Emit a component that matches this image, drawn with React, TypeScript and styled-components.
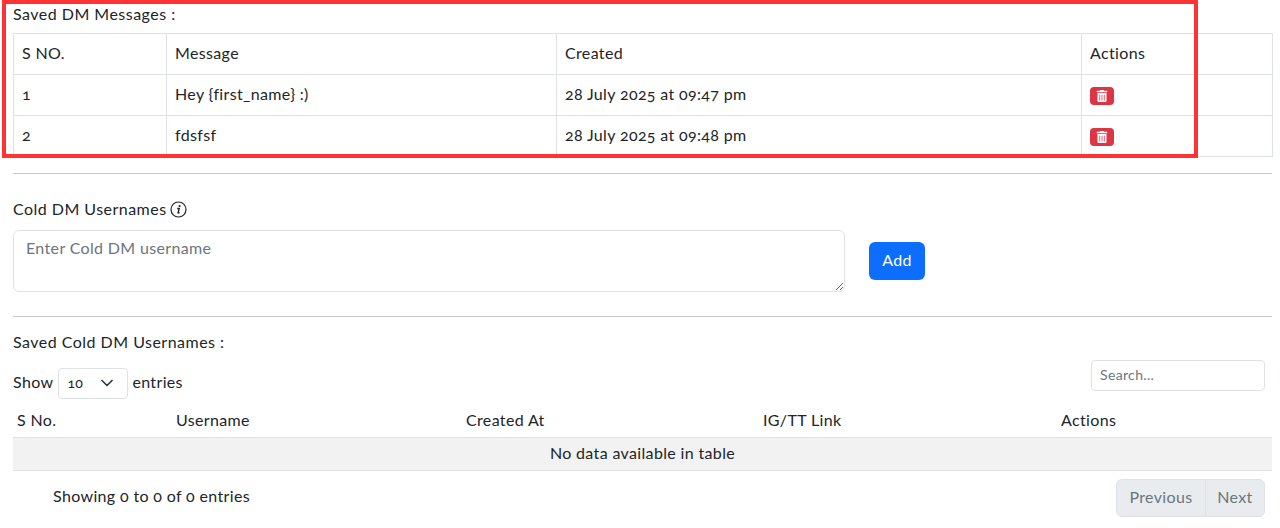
import React from "react";
import styled, { createGlobalStyle } from "styled-components";
import { FaTrashAlt } from "react-icons/fa";

const Global = createGlobalStyle`
  html, body { margin: 0; padding: 0; background: #fff; overflow: hidden; }
  body {
    font-family: "Lato", "Noto Sans", sans-serif;
    font-size: 16px;
    line-height: 24px;
    color: #212529;
    font-variant-numeric: oldstyle-nums;
    letter-spacing: 0.35px;
  }
`;

const Page = styled.main`
  padding: 2px 8px 0 13px;
  width: 1280px;
  height: 528px;
  box-sizing: border-box;
`;

const Highlight = styled.div`
  position: absolute;
  left: 2px;
  top: 0;
  width: 1196px;
  height: 158px;
  box-sizing: border-box;
  border: 4px solid #ff3333;
  pointer-events: none;
`;

const Title = styled.div`
  height: 24px;
  line-height: 24px;
  letter-spacing: 0.48px;
`;

const BorderedTable = styled.table`
  width: 1259px;
  margin-top: 7px;
  border-collapse: collapse;
  table-layout: fixed;
  th, td {
    border: 1px solid #dee2e6;
    padding: 0 8px 2px;
    height: 38px;
    font-weight: 400;
    text-align: left;
  }
`;

const DeleteButton = styled.button`
  display: flex;
  align-items: center;
  justify-content: center;
  width: 24px;
  height: 18px;
  margin-top: 4px;
  padding: 0;
  border: 0;
  border-radius: 4px;
  background: #dc3545;
  color: #fff;
  font-size: 12px;
`;

const Rule = styled.hr<{ $top: number }>`
  margin: ${(p) => p.$top}px 0 0;
  border: 0;
  border-top: 1px solid #c9c9c9;
`;

const Label = styled.div`
  display: flex;
  align-items: center;
  gap: 3px;
  margin-top: 23px;
  height: 24px;
  letter-spacing: 0.47px;
`;

const InfoIcon = styled.svg`
  width: 17px;
  height: 17px;
  color: #212529;
`;

const AddRow = styled.div`
  display: flex;
  align-items: center;
  gap: 24px;
  margin-top: 9px;
`;

const Area = styled.textarea`
  display: block;
  width: 832px;
  height: 62px;
  box-sizing: border-box;
  padding: 5px 12px;
  border: 1px solid #dee2e6;
  border-radius: 6px;
  font: inherit;
  letter-spacing: inherit;
  color: #212529;
  outline: none;
  &::placeholder { color: #6c757d; opacity: 1; }
`;

const AddButton = styled.button`
  width: 56px;
  height: 38px;
  border: 0;
  border-radius: 6px;
  background: #0d6efd;
  color: #fff;
  font: inherit;
  letter-spacing: inherit;
  padding: 0 0 2px;
`;

const Subtitle = styled(Title)`
  margin-top: 13px;
`;

const ControlsRow = styled.div`
  display: flex;
  align-items: flex-start;
  justify-content: space-between;
  height: 39px;
  padding-right: 7px;
  margin-top: 6px;
`;

const LengthControl = styled.div`
  display: flex;
  align-items: flex-start;
  gap: 4px;
  margin-top: 8px;
  height: 31px;
  line-height: 27px;
`;

const SelectBox = styled.div`
  display: flex;
  align-items: center;
  justify-content: space-between;
  box-sizing: border-box;
  width: 70px;
  height: 31px;
  margin-left: 1px;
  padding: 0 14px 2px 8px;
  border: 1px solid #dee2e6;
  border-radius: 4px;
  font-size: 14px;
`;

const Chevron = styled.svg`
  width: 12px;
  height: 12px;
  color: #343a40;
`;

const SearchInput = styled.input`
  box-sizing: border-box;
  width: 174px;
  height: 31px;
  padding: 0 8px 3px;
  border: 1px solid #dee2e6;
  border-radius: 4px;
  font: inherit;
  font-size: 14px;
  letter-spacing: inherit;
  outline: none;
  &::placeholder { color: #6c757d; opacity: 1; }
`;

const PlainTable = styled.table`
  width: 1259px;
  border-collapse: collapse;
  table-layout: fixed;
  th {
    height: 34px;
    padding: 4px 4px 0;
    font-weight: 400;
    text-align: left;
    border-bottom: 1px solid #dee2e6;
  }
  td {
    height: 30px;
    padding: 0 0 2px;
    text-align: center;
    background: #f2f2f2;
    border-bottom: 1px solid #dee2e6;
  }
`;

const Footer = styled.div`
  display: flex;
  align-items: center;
  justify-content: space-between;
  margin-top: 8px;
  padding: 0 7px 0 40px;
`;

const FooterText = styled.span`
  padding-bottom: 4px;
`;

const Pager = styled.div`
  display: flex;
  height: 38px;
  box-sizing: border-box;
  border: 1px solid #dee2e6;
  border-radius: 6px;
  background: #e9ecef;
  color: #6c757d;
  overflow: hidden;
`;

const PagerItem = styled.span<{ $first?: boolean }>`
  display: flex;
  align-items: center;
  justify-content: center;
  width: ${(p) => (p.$first ? 88 : 58)}px;
  padding-bottom: 3px;
  border-right: ${(p) => (p.$first ? "1px solid #dee2e6" : "0")};
`;

const messages = [
  { id: 1, text: "Hey {first_name} :)", created: "28 July 2025 at 09:47 pm" },
  { id: 2, text: "fdsfsf", created: "28 July 2025 at 09:48 pm" },
];

export default function App() {
  return (
    <Page>
      <Global />
      <Highlight />
      <Title>Saved DM Messages :</Title>
      <BorderedTable>
        <colgroup>
          <col style={{ width: 153 }} />
          <col style={{ width: 390 }} />
          <col style={{ width: 525 }} />
          <col style={{ width: 191 }} />
        </colgroup>
        <thead>
          <tr>
            <th>S NO.</th>
            <th>Message</th>
            <th>Created</th>
            <th>Actions</th>
          </tr>
        </thead>
        <tbody>
          {messages.map((m) => (
            <tr key={m.id}>
              <td>{m.id}</td>
              <td>{m.text}</td>
              <td>{m.created}</td>
              <td>
                <DeleteButton aria-label="Delete">
                  <FaTrashAlt />
                </DeleteButton>
              </td>
            </tr>
          ))}
        </tbody>
      </BorderedTable>
      <Rule $top={16} />
      <Label>
        Cold DM Usernames
        <InfoIcon viewBox="0 0 17 17" fill="none" stroke="currentColor">
          <circle cx="8.5" cy="8.5" r="7.5" strokeWidth="1.2" />
          <path d="M7.2 7.5h2l-1.1 4.3h1.5" strokeWidth="1.4" />
          <circle cx="9.6" cy="5" r="1.1" fill="currentColor" stroke="none" />
        </InfoIcon>
      </Label>
      <AddRow>
        <Area placeholder="Enter Cold DM username" />
        <AddButton>Add</AddButton>
      </AddRow>
      <Rule $top={24} />
      <Subtitle>Saved Cold DM Usernames :</Subtitle>
      <ControlsRow>
        <LengthControl>
          Show
          <SelectBox>
            10
            <Chevron viewBox="0 0 12 12" fill="none" stroke="currentColor" strokeWidth="1.7" strokeLinecap="round" strokeLinejoin="round">
              <path d="m1 3.5 5 5 5-5" />
            </Chevron>
          </SelectBox>
          entries
        </LengthControl>
        <SearchInput placeholder="Search..." />
      </ControlsRow>
      <PlainTable>
        <colgroup>
          <col style={{ width: 159 }} />
          <col style={{ width: 290 }} />
          <col style={{ width: 297 }} />
          <col style={{ width: 298 }} />
          <col style={{ width: 215 }} />
        </colgroup>
        <thead>
          <tr>
            <th>S No.</th>
            <th>Username</th>
            <th>Created At</th>
            <th>IG/TT Link</th>
            <th>Actions</th>
          </tr>
        </thead>
        <tbody>
          <tr>
            <td colSpan={5}>No data available in table</td>
          </tr>
        </tbody>
      </PlainTable>
      <Footer>
        <FooterText>Showing 0 to 0 of 0 entries</FooterText>
        <Pager>
          <PagerItem $first>Previous</PagerItem>
          <PagerItem>Next</PagerItem>
        </Pager>
      </Footer>
    </Page>
  );
}
